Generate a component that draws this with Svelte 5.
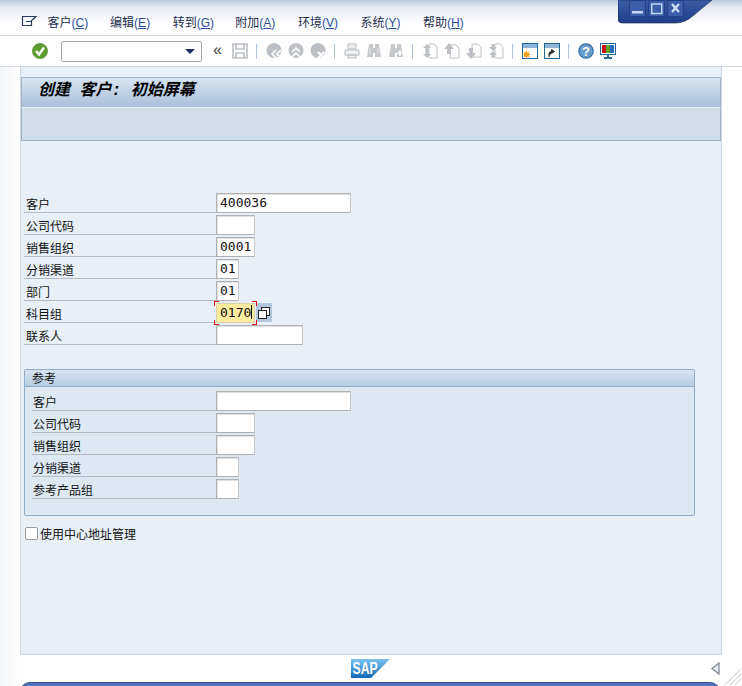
<script>
  const menus = [
    ["客户", "C"], ["编辑", "E"], ["转到", "G"], ["附加", "A"],
    ["环境", "V"], ["系统", "Y"], ["帮助", "H"]
  ];

  const mainRows = [
    { label: "客户", value: "400036", width: 135 },
    { label: "公司代码", value: "", width: 39 },
    { label: "销售组织", value: "0001", width: 39 },
    { label: "分销渠道", value: "01", width: 23 },
    { label: "部门", value: "01", width: 23 },
    { label: "科目组", value: "0170", width: 39, focus: true },
    { label: "联系人", value: "", width: 87 }
  ];

  const refRows = [
    { label: "客户", width: 135 },
    { label: "公司代码", width: 39 },
    { label: "销售组织", width: 39 },
    { label: "分销渠道", width: 23 },
    { label: "参考产品组", width: 23 }
  ];
</script>

{#snippet field(row)}
  <div class="row">
    <span class="label">{row.label}</span>
    {#if row.focus}
      <span class="focus" style="width: {row.width}px">
        <i class="c tl"></i><i class="c tr"></i><i class="c bl"></i><i class="c br"></i>
        {row.value}<b class="caret"></b>
      </span>
      <span class="f4">
        <svg width="14" height="14" viewBox="0 0 14 14">
          <rect x="4.500" y="1.500" width="8" height="8" fill="#fff" stroke="#222" />
          <rect x="1.500" y="4.500" width="8" height="8" fill="#fff" stroke="#222" />
        </svg>
      </span>
    {:else}
      <span class="input" style="width: {row.width}px">{row.value ?? ""}</span>
    {/if}
  </div>
{/snippet}

<div class="app">
  <div class="winctl">
    <svg width="100" height="25" viewBox="0 0 100 25">
      <defs>
        <linearGradient id="wg" x1="0" y1="0" x2="0" y2="1">
          <stop offset="0" stop-color="#3a5ca6" />
          <stop offset="1" stop-color="#1f3f88" />
        </linearGradient>
      </defs>
      <path d="M0 0H94L76 15Q67 23 58 23H4Q0 23 0 19Z" fill="url(#wg)" stroke="#16264f" stroke-width="0.600" />
      <g fill="#3a5ea9" stroke="#223f85">
        <rect x="11.500" y="0.500" width="16" height="16" rx="2" />
        <rect x="30.500" y="0.500" width="16" height="16" rx="2" />
        <rect x="49.500" y="0.500" width="16" height="16" rx="2" />
      </g>
      <rect x="14" y="11" width="11" height="2.500" fill="#c4d4f2" />
      <rect x="33.750" y="4" width="10" height="9.500" fill="none" stroke="#c4d4f2" stroke-width="1.500" />
      <path d="M54 4L61 12M61 4L54 12" stroke="#cddaf4" stroke-width="2.400" />
    </svg>
  </div>

  <div class="menubar">
    <svg class="menuicon" width="16" height="14" viewBox="0 0 16 14">
      <path d="M1.500 1.500H15L10.500 5.500V10.500H1.500ZM5 6.500H10.500" fill="none" stroke="#2a3a5e" stroke-width="1.200" />
    </svg>
    {#each menus as m}
      <span class="menu">{m[0]}<em>(<u>{m[1]}</u>)</em></span>
    {/each}
  </div>

  <div class="toolbar">
    <svg class="ic" viewBox="0 0 16 16">
      <circle cx="8" cy="8" r="7.600" fill="#5d9e2f" stroke="#3f7a1e" stroke-width="0.600" />
      <path d="M4 8L7 11.500L12 4.500" fill="none" stroke="#fff" stroke-width="2.400" />
    </svg>
    <div class="combo"><span class="arrow"></span></div>
    <span class="chev">«</span>

    <svg class="ic" viewBox="0 0 16 16">
      <path d="M1 1H15V15H1ZM4 1V6H12V1M4 15V10H12V15" fill="none" stroke="#b9bdc2" stroke-width="1.600" />
    </svg>
    <span class="sep"></span>
    <svg class="ic" viewBox="0 0 16 16">
      <circle cx="8" cy="7.500" r="7.500" fill="#bcbfc3" />
      <path d="M10 7L6 11L10 15M15 7L11 11L15 15" fill="none" stroke="#fff" stroke-width="1.700" />
    </svg>
    <svg class="ic" viewBox="0 0 16 16">
      <circle cx="8" cy="7.500" r="7.500" fill="#bcbfc3" />
      <path d="M4 9L8 5L12 9M4 14L8 10L12 14" fill="none" stroke="#fff" stroke-width="1.700" />
    </svg>
    <svg class="ic" viewBox="0 0 16 16">
      <circle cx="8" cy="7.500" r="7.500" fill="#bcbfc3" />
      <path d="M8 9L14 15M14 9L8 15" fill="none" stroke="#fff" stroke-width="2" />
    </svg>
    <span class="sep"></span>
    <svg class="ic" viewBox="0 0 16 16">
      <path d="M4 1H12V6H4ZM1 7H15V12H1ZM4 12H12V15H4Z" fill="#eceded" stroke="#b9bdc2" />
    </svg>
    <svg class="ic" viewBox="0 0 16 16">
      <path d="M3 1H7V5H9V1H13L15 14H9V10H7V14H1Z" fill="#c6c9cc" />
      <path d="M4 5V11M12 5V11" stroke="#e6e7e9" />
    </svg>
    <svg class="ic" viewBox="0 0 16 16">
      <path d="M3 1H7V5H9V1H13L15 14H9V10H7V14H1Z" fill="#c6c9cc" />
      <path d="M12 7V13M9 10H15" stroke="#fff" stroke-width="1.600" />
    </svg>
    <span class="sep"></span>
    <svg class="ic" viewBox="0 0 16 16">
      <path d="M7 1H12L15 4V15H7Z" fill="#fff" stroke="#bcbfc3" />
      <path d="M5 1L1 5H3.500V8H6.500V5H9ZM5 15L1 11H3.500V8H6.500V11H9Z" fill="#bcbfc3" />
    </svg>
    <svg class="ic" viewBox="0 0 16 16">
      <path d="M6 2H12L15 5V15H6Z" fill="#fff" stroke="#bcbfc3" />
      <path d="M5 0L0 6H3V11H7V6H10Z" fill="#bcbfc3" />
    </svg>
    <svg class="ic" viewBox="0 0 16 16">
      <path d="M6 1H12L15 4V14H6Z" fill="#fff" stroke="#bcbfc3" />
      <path d="M5 16L0 10H3V5H7V10H10Z" fill="#bcbfc3" />
    </svg>
    <svg class="ic" viewBox="0 0 16 16">
      <path d="M7 1H12L15 4V15H7Z" fill="#fff" stroke="#bcbfc3" />
      <path d="M5 8L1 4H3.500V1H6.500V4H9ZM5 8L1 12H3.500V15H6.500V12H9Z" fill="#bcbfc3" />
    </svg>
    <span class="sep"></span>
    <svg class="ic" viewBox="0 0 16 16">
      <rect x="0.500" y="0.500" width="15" height="15" fill="#fff" stroke="#1f6a9a" />
      <rect x="1" y="1" width="14" height="4" fill="#8db4d6" />
      <circle cx="4.500" cy="11.500" r="2.600" fill="#f5a311" />
      <path d="M4.500 7.500V15.500M0.500 11.500H8.500M1.700 8.700L7.300 14.300M7.300 8.700L1.700 14.300" stroke="#f5a311" />
    </svg>
    <svg class="ic" viewBox="0 0 16 16">
      <rect x="0.500" y="0.500" width="15" height="15" fill="#fff" stroke="#1f6a9a" />
      <rect x="1" y="1" width="14" height="4" fill="#8db4d6" />
      <path d="M5 14V10.500Q5 8.500 7.500 8.500H8.500M7.500 6.500L10.500 8.500L7.500 10.500Z" fill="#333" stroke="#333" />
    </svg>
    <span class="sep"></span>
    <svg class="ic" viewBox="0 0 16 16">
      <circle cx="8" cy="8" r="7.200" fill="#6a9ccc" stroke="#2d6a9f" stroke-width="1.200" />
      <text x="8" y="12.500" text-anchor="middle" class="q">?</text>
    </svg>
    <svg class="ic" viewBox="0 0 16 16">
      <rect x="0.500" y="0.500" width="15" height="11" fill="#fff" stroke="#1f6a9a" />
      <rect x="2" y="2" width="4" height="8" fill="#c8141c" />
      <rect x="6" y="2" width="4" height="8" fill="#5aa32c" />
      <rect x="10" y="2" width="4" height="8" fill="#2a6fc0" />
      <path d="M8 12V14M4 15H12" stroke="#1f6a9a" stroke-width="2" />
    </svg>
  </div>

  <div class="panel">
    <div class="titlebar">创建 客户: 初始屏幕</div>
    <div class="appbar"></div>

    <div class="form">
      {#each mainRows as row}
        {@render field(row)}
      {/each}
    </div>

    <div class="group">
      <div class="grouphead">参考</div>
      <div class="groupbody">
        {#each refRows as row}
          {@render field(row)}
        {/each}
      </div>
    </div>

    <label class="check"><span class="box"></span>使用中心地址管理</label>
  </div>

  <div class="footer">
    <svg class="logo" width="39" height="19" viewBox="0 0 39 19">
      <defs>
        <linearGradient id="sapg" x1="0" y1="0" x2="0" y2="1">
          <stop offset="0" stop-color="#7cc4f0" />
          <stop offset="1" stop-color="#1268b8" />
        </linearGradient>
      </defs>
      <path d="M0 0H39L20 19H0Z" fill="url(#sapg)" />
      <text transform="translate(1.500 15) scale(0.720 1)" class="saptext">SAP</text>
    </svg>
    <svg class="tri" width="9" height="13" viewBox="0 0 9 13">
      <path d="M8 1V12L1 6.500Z" fill="#e8edf3" stroke="#7f8b98" stroke-width="1.300" />
    </svg>
  </div>

  <div class="statusbar"></div>
  <svg class="grip" width="18" height="18" viewBox="0 0 18 18">
    <path d="M17 1L1 17M17 6L6 17M17 11L11 17" stroke="#c3c8cf" fill="none" />
  </svg>
</div>

<style>
  :global(body) {
    background: #fff;
  }

  .app {
    position: relative;
    width: 742px;
    height: 686px;
    overflow: hidden;
    font-family: "Noto Sans CJK SC", "Liberation Sans", sans-serif;
    font-size: 12px;
    color: #111;
    background: linear-gradient(90deg, #f3f5f8 0, #fff 20px);
  }

  .winctl {
    position: absolute;
    left: 618px;
    top: 0;
    line-height: 0;
  }

  .menubar {
    height: 36px;
    box-sizing: border-box;
    border-bottom: 1px solid #cfd6e0;
    display: flex;
    align-items: center;
    padding: 8px 0 0 21px;
    background: linear-gradient(180deg, #bcc8df 0, #e4e9f2 7px, #fff 24px);
  }

  .menuicon {
    margin-right: 10.500px;
  }

  .menu {
    width: 62.600px;
    color: #1e2d4d;
    white-space: nowrap;
  }

  .menu em {
    font-style: normal;
    color: #2a4e9a;
    font-family: "Liberation Sans", sans-serif;
  }

  .toolbar {
    height: 31px;
    box-sizing: border-box;
    border-bottom: 1px solid #d3d8df;
    display: flex;
    align-items: center;
    padding: 0 0 0 32px;
    background: #fff;
  }

  .ic {
    width: 16px;
    height: 16px;
    margin-right: 6px;
    flex: none;
  }

  .ic:first-child {
    margin-right: 13px;
  }

  .q {
    font: bold 13px "Liberation Sans", sans-serif;
    fill: #fff;
  }

  .combo {
    width: 141px;
    height: 21px;
    box-sizing: border-box;
    border: 1px solid #a8a8a8;
    border-radius: 2px;
    position: relative;
    margin-right: 10px;
    background: #fff;
  }

  .arrow {
    position: absolute;
    right: 6px;
    top: 7px;
    border: 5px solid transparent;
    border-top: 5px solid #1f2f5f;
    border-bottom: 0;
  }

  .chev {
    font: 16px/16px "Liberation Sans", sans-serif;
    color: #444;
    width: 20px;
    padding-left: 1px;
    box-sizing: border-box;
    margin-top: -3px;
  }

  .sep {
    width: 12px;
    height: 15px;
    flex: none;
    margin-left: -1px;
    margin-right: 1px;
    background: linear-gradient(#a9c3da, #a9c3da) 3px 0 / 1px 100% no-repeat;
  }

  .panel {
    margin: 0 20px 0 20px;
    height: 588px;
    box-sizing: border-box;
    border: 1px solid #cdd7e4;
    border-top: 0;
    background: #e8eff7;
    padding-top: 10px;
  }

  .titlebar {
    height: 31px;
    box-sizing: border-box;
    border: 1px solid #a4b4c6;
    border-bottom: 1px solid #e3ecf3;
    padding-left: 16px;
    background: linear-gradient(180deg, #d6e4f0, #a9c0da);
    font: italic bold 16px/26px "Liberation Mono", "Noto Sans CJK SC", monospace;
    color: #000;
  }

  .appbar {
    height: 33px;
    box-sizing: border-box;
    background: #cfdde8;
    border: 1px solid #a4b4c6;
    border-top: 0;
  }

  .form {
    margin: 52px 0 0 3px;
  }

  .row {
    height: 22px;
    display: flex;
    align-items: flex-start;
  }

  .label {
    width: 192px;
    height: 20px;
    box-sizing: border-box;
    border-bottom: 1px solid #b6b9bd;
    padding: 2px 0 0 2px;
    line-height: 18px;
    flex: none;
    white-space: nowrap;
    color: #111;
  }

  .input,
  .focus {
    height: 20px;
    box-sizing: border-box;
    display: block;
    flex: none;
    border: 1px solid #b0b0b0;
    border-right-color: #c6c6c6;
    box-shadow: inset 1px 1px 0 #e2e2e2;
    background: #fff;
    padding-left: 3px;
    font: 13px/18px "DejaVu Sans Mono", monospace;
    color: #111;
  }

  .focus {
    position: relative;
    background: #fcec9f;
    border-color: #d9d2a6;
    box-shadow: none;
    white-space: nowrap;
  }

  .caret {
    display: inline-block;
    width: 1px;
    height: 14px;
    background: #000;
    vertical-align: -2px;
  }

  .c {
    position: absolute;
    width: 4px;
    height: 4px;
    border: 0 solid #e01010;
  }

  .tl {
    left: -3px;
    top: -3px;
    border-width: 1px 0 0 1px;
  }

  .tr {
    right: -3px;
    top: -3px;
    border-width: 1px 1px 0 0;
  }

  .bl {
    left: -3px;
    bottom: -3px;
    border-width: 0 0 1px 1px;
  }

  .br {
    right: -3px;
    bottom: -3px;
    border-width: 0 1px 1px 0;
  }

  .f4 {
    width: 16px;
    height: 19px;
    margin-left: 1px;
    background: #b4c6da;
    display: flex;
    align-items: center;
    justify-content: center;
  }

  .group {
    margin: 22px 26px 0 3px;
    height: 147px;
    box-sizing: border-box;
    border: 1px solid #8eaccb;
    border-radius: 2px;
    background: #dde8f3;
  }

  .grouphead {
    height: 17px;
    box-sizing: border-box;
    border-bottom: 1px solid #8eaccb;
    background: linear-gradient(180deg, #d6e4f1, #b5cde3);
    padding-left: 7px;
    line-height: 16px;
    color: #111;
  }

  .groupbody {
    padding: 4px 0 0 7px;
  }

  .groupbody .label {
    width: 184px;
    padding-left: 1px;
  }

  .check {
    display: flex;
    align-items: center;
    margin: 10px 0 0 4px;
    height: 15px;
    line-height: 15px;
    color: #111;
  }

  .box {
    width: 13px;
    height: 13px;
    box-sizing: border-box;
    border: 1px solid #9b9b9b;
    border-radius: 2px;
    background: #fff;
    margin-right: 2px;
  }

  .footer {
    height: 27px;
    position: relative;
    display: flex;
    justify-content: center;
    align-items: flex-start;
    padding-top: 4px;
    box-sizing: border-box;
  }

  .logo {
    margin-left: -1px;
  }

  .saptext {
    font: bold 17px "Liberation Sans", sans-serif;
    fill: #fff;
  }

  .tri {
    position: absolute;
    left: 711px;
    top: 7px;
  }

  .statusbar {
    position: absolute;
    left: 20px;
    width: 700px;
    top: 682px;
    height: 12px;
    border-radius: 10px 10px 0 0;
    background: #4f73bd;
    border-top: 1px solid #2f4f96;
  }

  .grip {
    position: absolute;
    right: 0;
    bottom: 0;
  }
</style>
